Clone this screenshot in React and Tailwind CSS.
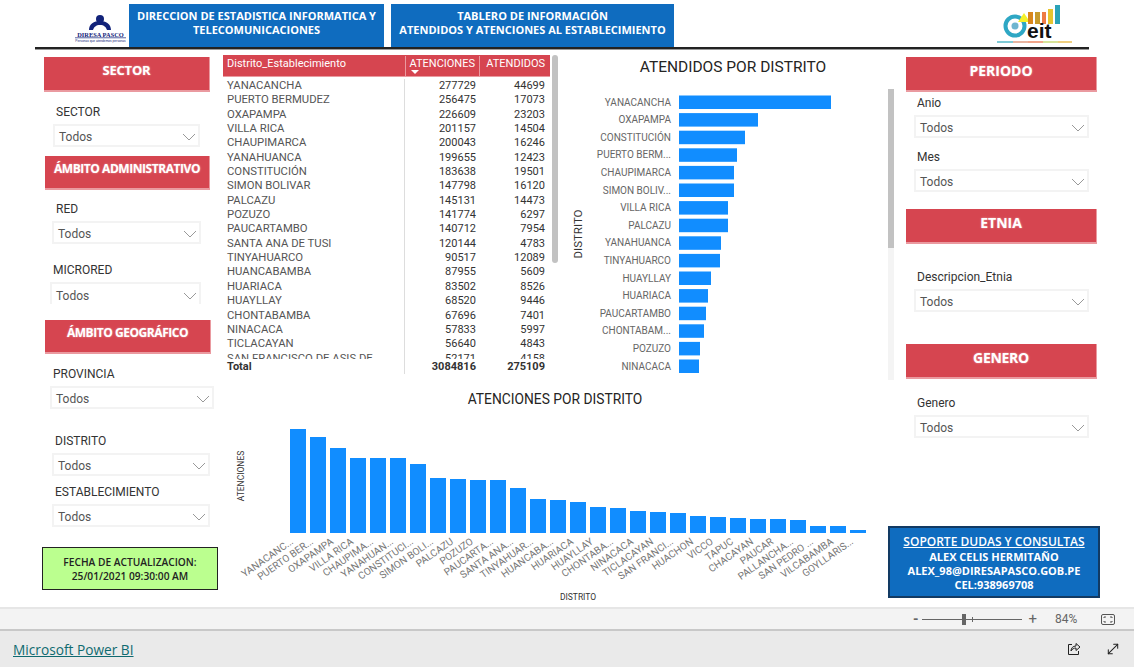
import React from 'react';
import { MoveDiagonal } from 'lucide-react';

const distritos = [
  ['YANACANCHA', 277729, 44699],
  ['PUERTO BERMUDEZ', 256475, 17073],
  ['OXAPAMPA', 226609, 23203],
  ['VILLA RICA', 201157, 14504],
  ['CHAUPIMARCA', 200043, 16246],
  ['YANAHUANCA', 199655, 12423],
  ['CONSTITUCIÓN', 183638, 19501],
  ['SIMON BOLIVAR', 147798, 16120],
  ['PALCAZU', 145131, 14473],
  ['POZUZO', 141774, 6297],
  ['PAUCARTAMBO', 140712, 7954],
  ['SANTA ANA DE TUSI', 120144, 4783],
  ['TINYAHUARCO', 90517, 12089],
  ['HUANCABAMBA', 87955, 5609],
  ['HUARIACA', 83502, 8526],
  ['HUAYLLAY', 68520, 9446],
  ['CHONTABAMBA', 67696, 7401],
  ['NINACACA', 57833, 5997],
  ['TICLACAYAN', 56640, 4843],
  ['SAN FRANCISCO DE ASIS DE', 52171, 4158],
];

const atendidos = [
  ['YANACANCHA', 152], ['OXAPAMPA', 79], ['CONSTITUCIÓN', 66], ['PUERTO BERM...', 58],
  ['CHAUPIMARCA', 55], ['SIMON BOLIV...', 55], ['VILLA RICA', 49], ['PALCAZU', 49],
  ['YANAHUANCA', 42], ['TINYAHUARCO', 41], ['HUAYLLAY', 32], ['HUARIACA', 29],
  ['PAUCARTAMBO', 27], ['CHONTABAM...', 25], ['POZUZO', 21], ['NINACACA', 20],
];

const atenciones = [
  ['YANACANC...', 104], ['PUERTO BER...', 96], ['OXAPAMPA', 85], ['VILLA RICA', 75],
  ['CHAUPIMA...', 75], ['YANAHUAN...', 75], ['CONSTITUCI...', 69], ['SIMON BOLI...', 55],
  ['PALCAZU', 54], ['POZUZO', 53], ['PAUCARTA...', 53], ['SANTA ANA...', 45],
  ['TINYAHUAR...', 34], ['HUANCABA...', 33], ['HUARIACA', 31], ['HUAYLLAY', 26],
  ['CHONTABA...', 25], ['NINACACA', 22], ['TICLACAYAN', 21], ['SAN FRANCI...', 20],
  ['HUACHON', 17], ['VICCO', 16], ['TAPUC', 15], ['CHACAYAN', 14],
  ['PAUCAR', 14], ['PALLANCHA...', 13], ['SAN PEDRO ...', 7], ['VILCABAMBA', 7], ['GOYLLARIS...', 3],
];

const Banner = ({ title, className }) => (
  <div className={`flex items-start justify-center bg-[#d64550] border-b-2 border-r border-[#ea9aa0] font-bold text-white [font-family:'Open_Sans',sans-serif] [text-shadow:0_0_2px_#ffffff88] ${className}`}>
    {title}
  </div>
);

const Slicer = ({ label, className, labelClass = 'pl-[3px]', clipped }) => (
  <div className={className}>
    <div className={`h-4 leading-4 mb-1 text-[12px] text-[#333] whitespace-nowrap ${labelClass}`}>{label}</div>
    <div className={`flex items-center justify-between pl-[4px] pr-[2px] pt-[3px] bg-white border-2 border-[#f3f3f3] text-[12px] text-[#555] ${clipped ? 'h-[22px] border-b-0' : 'h-[23px]'}`}>
      <span>Todos</span>
      <svg width="14" height="8" viewBox="0 0 14 8" fill="none" stroke="#999" strokeWidth="1">
        <path d="M1 1l6 6 6-6" />
      </svg>
    </div>
  </div>
);

const DiresaLogo = () => (
  <svg width="56" height="44" viewBox="0 0 56 44">
    <circle cx="27" cy="15" r="4" fill="#12237a" />
    <path d="M16 26c0-6 5-9 11-9s11 3 11 9l-4 0c-1-3-3-5-7-5s-6 2-7 5z" fill="#12237a" />
    <text x="27.5" y="33" textAnchor="middle" fontFamily="Liberation Serif, serif" fontWeight="700" fontSize="6.4" fill="#12237a">DIRESA PASCO</text>
    <rect x="2" y="33.5" width="51" height="0.7" fill="#12237a" />
    <text x="27.5" y="37.5" textAnchor="middle" fontFamily="Liberation Sans, sans-serif" fontSize="3.2" fill="#12237a">Personas que atendemos personas</text>
  </svg>
);

const EitLogo = () => (
  <svg width="78" height="40" viewBox="0 0 78 40">
    <circle cx="19" cy="21" r="9.5" fill="none" stroke="#2ea7c4" strokeWidth="4" />
    <circle cx="19" cy="21" r="3.5" fill="#6fb6cf" />
    <polygon points="28,8 22,17 34,17" fill="#f4f12a" />
    <rect x="32" y="7" width="5" height="12" fill="#d9861c" />
    <rect x="39" y="7" width="5" height="12" fill="#c79a2c" />
    <rect x="46" y="7" width="4" height="12" fill="#ee7b45" />
    <rect x="52" y="4" width="5" height="15" fill="#e6c52f" />
    <rect x="59" y="0" width="5" height="19" fill="#2ba3b8" />
    <text x="31" y="33" fontFamily="Liberation Sans, sans-serif" fontWeight="700" fontSize="21" fill="#111">eit</text>
    <rect x="1" y="36" width="16" height="2" fill="#7fcad6" />
    <rect x="17" y="36" width="15" height="2" fill="#e8b4a0" />
    <rect x="32" y="36" width="15" height="2" fill="#f2a58a" />
    <rect x="47" y="36" width="15" height="2" fill="#d8e49a" />
    <rect x="62" y="36" width="14" height="2" fill="#f0cf80" />
  </svg>
);

const HeaderBox = ({ children, className }) => (
  <div className={`flex flex-col items-center h-[43px] pt-[5px] bg-[#0f6cbf] text-white text-[11px] font-bold leading-[14px] text-center [font-family:'Open_Sans',sans-serif] ${className}`}>
    {children}
  </div>
);

const DataTable = () => (
  <div className="w-[327px] mt-[5px] shrink-0">
    <div className="flex h-[22px] pt-px bg-[#d64550] border-b border-[#ea9aa0] text-white text-[11px]">
      <div className="w-[183px] pl-[4px] border-r border-[#ea9aa0]">Distrito_Establecimiento</div>
      <div className="relative w-[74px] text-right pr-[4px] border-r border-[#ea9aa0]">
        ATENCIONES
        <span className="absolute left-[5px] top-[14px] w-0 h-0 border-x-[4px] border-t-[4px] border-x-transparent border-t-white" />
      </div>
      <div className="w-[70px] text-right pr-[5px]">ATENDIDOS</div>
    </div>
    <div className="h-[282px] overflow-hidden pt-[2px]">
      {distritos.map(([name, a, b]) => (
        <div key={name} className="flex h-[14.35px] leading-[14px] text-[11.3px] text-[#555]">
          <div className="w-[182px] pl-[4px] border-r border-[#ddd] truncate">{name}</div>
          <div className="w-[71px] text-right text-[11px] text-[#333]">{a}</div>
          <div className="w-[69px] text-right text-[11px] text-[#333]">{b}</div>
        </div>
      ))}
    </div>
    <div className="flex h-[15px] leading-[15px] text-[11px] font-bold text-[#333]">
      <div className="w-[182px] pl-[4px] border-r border-[#ddd]">Total</div>
      <div className="w-[71px] text-right">3084816</div>
      <div className="w-[69px] text-right">275109</div>
    </div>
  </div>
);

const AtendidosChart = () => (
  <svg width="335" height="325" viewBox="560 55 335 325" className="block mt-[5px]" fontFamily="Roboto, sans-serif">
    <text x="733" y="71.5" textAnchor="middle" fontSize="15.5" fill="#252423">ATENDIDOS POR DISTRITO</text>
    <text transform="translate(582 234) rotate(-90)" textAnchor="middle" fontSize="11.5" fill="#333">DISTRITO</text>
    {atendidos.map(([name, w], i) => (
      <g key={name}>
        <text x="671" y={105.5 + i * 17.6} textAnchor="end" fontSize="10" fill="#666">{name}</text>
        <rect x="679" y={95.5 + i * 17.6} width={w} height="13.5" fill="#118dff" />
      </g>
    ))}
    <rect x="888" y="89" width="6" height="159" fill="#c2c2c2" />
    <rect x="888" y="248" width="6" height="132" fill="#f4f4f4" />
  </svg>
);

const AtencionesChart = () => (
  <svg width="670" height="219" viewBox="223 388 670 219" className="block mt-[8px]" fontFamily="Roboto, sans-serif">
    <text x="555" y="404" textAnchor="middle" fontSize="13.8" fill="#252423">ATENCIONES POR DISTRITO</text>
    <text transform="translate(244 476) rotate(-90)" textAnchor="middle" fontSize="8.5" fill="#333">ATENCIONES</text>
    <text x="578" y="600" textAnchor="middle" fontSize="8.5" fill="#333">DISTRITO</text>
    {atenciones.map(([name, h], i) => (
      <g key={name}>
        <rect x={290 + i * 20} y={533 - h} width="16" height={h} fill="#118dff" />
        <text transform={`translate(${294 + i * 20} 543) rotate(-35)`} textAnchor="end" fontSize="10" fill="#777">{name}</text>
      </g>
    ))}
  </svg>
);

const ZoomBar = () => (
  <div className="flex items-center justify-end h-[24px] bg-[#f3f3f3] border-t-2 border-b-2 border-t-[#e6e6e6] border-b-[#c8c8c8] pr-[19px] text-[#666]">
    <span className="text-[14px] font-bold mr-[4px]">-</span>
    <div className="relative w-[100px] h-px bg-[#666]">
      <span className="absolute left-[40px] -top-[5px] w-[4px] h-[11px] bg-[#666]" />
      <span className="absolute left-[50px] -top-[2px] w-px h-[5px] bg-[#666]" />
    </div>
    <span className="text-[15px] ml-[6px] mr-[18px]">+</span>
    <span className="text-[12px] mr-[22px] w-[24px]">84%</span>
    <svg width="14" height="11" viewBox="0 0 14 11" fill="none" stroke="#555">
      <rect x="0.5" y="0.5" width="13" height="10" rx="1.5" />
      <path d="M3 4V3h2M9 3h2v1M11 7v1H9M5 8H3V7" />
    </svg>
  </div>
);

const App = () => (
  <div className="w-[1134px] h-[667px] overflow-hidden bg-white [font-family:Roboto,sans-serif]">
    {/* Cabecera */}
    <div className="h-[50px] pt-[4px] relative">
      <div className="flex items-start">
        <div className="ml-[73px] w-[56px]"><DiresaLogo /></div>
        <HeaderBox className="w-[255px]">
          <span>DIRECCION DE ESTADISTICA INFORMATICA Y</span>
          <span>TELECOMUNICACIONES</span>
        </HeaderBox>
        <HeaderBox className="w-[283px] ml-[7px]">
          <span>TABLERO DE INFORMACIÓN</span>
          <span>ATENDIDOS Y ATENCIONES AL ESTABLECIMIENTO</span>
        </HeaderBox>
        <div className="ml-[322px] mt-[1px]"><EitLogo /></div>
      </div>
      <div className="absolute left-[35px] top-[47px] w-[1054px] h-[3px] bg-[#222] border-b border-[#999]" />
    </div>

    <div className="flex h-[557px]">
      {/* Filtros izquierda */}
      <div className="ml-[42px] w-[179px] shrink-0">
        <Banner title="SECTOR" className="ml-[2px] mt-[7px] w-[166px] h-[35px] pt-[4px] text-[13px] tracking-[-0.2px]" />
        <Slicer label="SECTOR" className="ml-[11px] mt-[12px] w-[147px]" />
        <Banner title="ÁMBITO ADMINISTRATIVO" className="ml-[3px] mt-[9px] w-[165px] h-[34px] pt-[4px] text-[12px] tracking-[-0.45px]" />
        <Slicer label="RED" className="ml-[10px] mt-[11px] w-[149px]" labelClass="pl-[4px]" />
        <Slicer label="MICRORED" className="ml-[8px] mt-[18px] w-[151px]" clipped />
        <Banner title="ÁMBITO GEOGRÁFICO" className="ml-[3px] mt-[16px] w-[166px] h-[34px] pt-[4px] text-[12px] tracking-[-0.45px]" />
        <Slicer label="PROVINCIA" className="ml-[8px] mt-[12px] w-[164px]" />
        <Slicer label="DISTRITO" className="ml-[10px] mt-[24px] w-[158px]" />
        <Slicer label="ESTABLECIMIENTO" className="ml-[10px] mt-[8px] w-[158px]" />
        <div className="mt-[20px] w-[176px] h-[43px] flex flex-col items-center justify-center bg-[#bbff8f] border border-[#222] text-[10.2px] leading-[14px] font-semibold text-[#222] [font-family:'Open_Sans',sans-serif]">
          <span>FECHA DE ACTUALIZACION:</span>
          <span>25/01/2021 09:30:00 AM</span>
        </div>
      </div>

      {/* Centro */}
      <div className="ml-[2px] w-[672px] shrink-0">
        <div className="flex h-[330px]">
          <DataTable />
          <div className="ml-[2px] mt-[5px] w-[6px] h-[208px] shrink-0 rounded-[3px] bg-[#c2c2c2]" />
          <div className="ml-[2px] shrink-0"><AtendidosChart /></div>
        </div>
        <AtencionesChart />
      </div>

      {/* Filtros derecha */}
      <div className="w-[212px] ml-[-7px] shrink-0 relative">
        <Banner title="PERIODO" className="ml-[18px] mt-[7px] w-[191px] h-[35px] pt-[3px] text-[14px]" />
        <Slicer label="Anio" className="ml-[26px] mt-[3px] w-[175px]" />
        <Slicer label="Mes" className="ml-[26px] mt-[11px] w-[175px]" />
        <Banner title="ETNIA" className="ml-[18px] mt-[17px] w-[191px] h-[35px] pt-[3px] text-[14px]" />
        <Slicer label="Descripcion_Etnia" className="ml-[26px] mt-[25px] w-[175px]" />
        <Banner title="GENERO" className="ml-[18px] mt-[32px] w-[191px] h-[35px] pt-[3px] text-[14px] tracking-[-0.3px]" />
        <Slicer label="Genero" className="ml-[26px] mt-[16px] w-[175px]" />
        <div className="mt-[88px] w-[212px] h-[72px] flex flex-col items-center justify-center bg-[#0f6cbf] border-2 border-[#123a63] text-white text-[11px] leading-[14px] font-bold [font-family:'Open_Sans',sans-serif]">
          <span className="text-[12px] leading-[17px] underline font-semibold">SOPORTE DUDAS Y CONSULTAS</span>
          <span>ALEX CELIS HERMITAÑO</span>
          <span>ALEX_98@DIRESAPASCO.GOB.PE</span>
          <span>CEL:938969708</span>
        </div>
      </div>
    </div>

    <ZoomBar />

    {/* Pie Power BI */}
    <div className="flex items-center justify-between h-[36px] bg-[#eaeaea] pl-[13px] pr-[14px]">
      <a className="pt-[2px] text-[13.7px] text-[#0f6a70] underline [font-family:'Open_Sans',sans-serif]">Microsoft Power BI</a>
      <div className="flex items-center gap-[25px]">
        <svg width="14" height="14" viewBox="0 0 14 14" fill="none" stroke="#222" strokeWidth="1">
          <path d="M5 2.5H1.5v10h10V9" />
          <path d="M4 9c0-3 2-5 5-5V1.5L13 5 9 8.5V6C7 6 5 7 4 9z" />
        </svg>
        <MoveDiagonal className="w-[14px] h-[14px] text-[#222]" strokeWidth={1.5} style={{ transform: 'scale(1.15)' }} />
      </div>
    </div>
  </div>
);

export default App;
